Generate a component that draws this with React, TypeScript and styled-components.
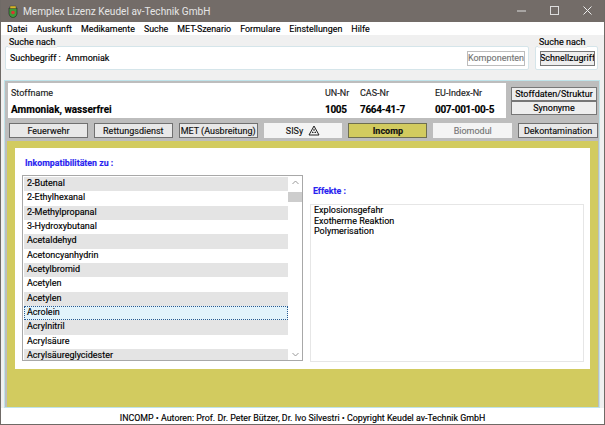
import React from "react";
import styled, { createGlobalStyle } from "styled-components";

const Global = createGlobalStyle`
  html, body { margin: 0; padding: 0; background: #f0f0f0; }
  * { box-sizing: border-box; }
`;

const Win = styled.div`
  width: 605px; height: 425px; display: flex; flex-direction: column;
  background: #f0f0f0; border: 1px solid #6f6a66; border-top: 0; overflow: hidden;
  font-family: Roboto, "Liberation Sans", Arial, sans-serif; font-size: 9px; color: #000;
  -webkit-text-stroke: 0.15px currentColor;
`;
const TitleBar = styled.div`
  height: 22px; flex: none; background: #736c68; color: #e6e6e6; display: flex; align-items: center;
  font-size: 10.1px; padding-left: 6px; -webkit-text-stroke: 0;
`;
const TitleText = styled.span` margin-left: 4px; flex: 1; `;
const WinBtn = styled.div`
  width: 33px; height: 22px; display: flex; align-items: center; justify-content: center;
`;
const Menu = styled.div`
  height: 13px; flex: none; display: flex; gap: 9px; padding-left: 6px; background: #fff; align-items: center; font-size: 8.9px;
`;
const SearchRow = styled.div`
  height: 45px; flex: none; display: flex; padding: 0 0 0 4px; gap: 6px;
`;
const SearchGroup = styled.div<{ $w: number }>`
  position: relative; width: ${p => p.$w}px; height: 24px; margin-top: 11px; background: #fff;
  border: 1px solid #d5e5ea; border-radius: 2px; display: flex; align-items: center; padding: 0 3px 0 4px;
`;
const Legend = styled.span`
  position: absolute; top: -11px; left: 2px; background: #f0f0f0; padding: 0 1px; line-height: 12px;
`;
const SearchLabel = styled.span` width: 56px; `;
const SearchValue = styled.span` flex: 1; `;
const SmallBtn = styled.div<{ $w: number; $h?: number; $dim?: boolean }>`
  width: ${p => p.$w}px; height: ${p => p.$h ?? 14}px; flex: none; display: flex; align-items: center; justify-content: center;
  background: ${p => (p.$dim ? "#fff" : "#eee")}; color: ${p => (p.$dim ? "#777" : "#000")};
  border: 1px solid ${p => (p.$dim ? "#bdbdbd" : "#777")}; white-space: nowrap; font-size: 9px; overflow: hidden;
`;
const Main = styled.div`
  flex: 1; min-height: 0; background: #bdbdbd; border: 1px solid #bfe3ea; margin: 0 0 0 3px; padding: 2px 1px 0 3px;
  display: flex; flex-direction: column; width: 596px;
`;
const Substance = styled.div`
  height: 35px; flex: none; display: flex; gap: 5px;
`;
const SubstanceInfo = styled.div`
  width: 498px; background: #fff; display: grid; grid-template-columns: 314px 35px 75px 1fr; padding: 5px 3px 0 3px;
`;
const Field = styled.div`
  display: flex; flex-direction: column; gap: 5px;
`;
const FieldLabel = styled.span` font-size: 9px; color: #222; line-height: 11px; `;
const FieldValue = styled.span` font-size: 10px; font-weight: 700; color: #000; line-height: 11px; `;
const FieldNumber = styled(FieldValue)` letter-spacing: -0.35px; `;
const SideBtns = styled.div`
  display: flex; flex-direction: column; padding-top: 4px;
`;
const Tabs = styled.div`
  height: 18px; flex: none; margin-top: 5px; display: flex; gap: 6px; padding-left: 1px;
`;
const Tab = styled.div<{ $w: number; $kind?: "on" | "flat" | "dim" }>`
  width: ${p => p.$w}px; height: 15px; display: flex; align-items: center; justify-content: center; gap: 5px;
  font-size: 9px; white-space: nowrap;
  background: ${p => (p.$kind === "on" ? "#d2cb5f" : p.$kind === "flat" || p.$kind === "dim" ? "#f4f4f4" : "#e8e8e8")};
  color: ${p => (p.$kind === "dim" ? "#777" : "#111")};
  font-weight: ${p => (p.$kind === "on" ? 700 : 400)};
  border: 1px solid ${p => (p.$kind === "on" ? "#6e6e50" : p.$kind === "flat" || p.$kind === "dim" ? "#f4f4f4" : "#707070")};
`;
const Panel = styled.div`
  flex: 1; min-height: 0; background: #d2cb5f; margin-left: -1px; padding: 7px 8px 38px 8px; display: flex;
`;
const Card = styled.div`
  flex: 1; background: #fff; display: grid; grid-template-columns: 281px 274px; gap: 7px; padding: 0 6px 7px 7px;
`;
const Column = styled.div` display: flex; flex-direction: column; min-height: 0; `;
const Heading = styled.div<{ $h: number; $top: number }>`
  height: ${p => p.$h}px; flex: none; color: #2a1ff0; font-weight: 700; font-size: 8.8px; padding: ${p => p.$top}px 0 0 3px;
`;
const ListBox = styled.div`
  flex: 1; min-height: 0; position: relative; border: 1px solid #a8a8a8; padding: 1px 0 0 1px; margin-bottom: 1px; background: #fff; overflow: hidden;
`;
const Row = styled.div<{ $alt: boolean; $sel: boolean }>`
  height: 14.33px; width: 264px; padding: 0 0 2px 3px; display: flex; align-items: center; font-size: 9px;
  background: ${p => (p.$sel ? "#e2f3fb" : p.$alt ? "#e4e4e4" : "#fff")};
  outline: ${p => (p.$sel ? "1px dotted #2a5a90" : "none")}; outline-offset: -1px; color: #000;
`;
const Scroll = styled.div`
  position: absolute; top: 0; right: 0; bottom: 0; width: 14px; background: #fff; display: flex; flex-direction: column; align-items: center;
`;
const Arrow = styled.div` height: 12px; flex: none; display: flex; align-items: center; justify-content: center; `;
const Thumb = styled.div` width: 14px; height: 10px; background: #cdcdcd; margin-top: 4px; `;
const Spacer = styled.div` flex: 1; `;
const EffectBox = styled.div`
  flex: 1; border: 1px solid #e6e6e6; padding: 0 3px; font-size: 9px; line-height: 10.7px; color: #000;
`;
const Footer = styled.div`
  height: 16px; flex: none; background: #fff; display: flex; align-items: center; justify-content: center; padding-top: 3px; font-size: 8.85px; color: #000;
`;

const items = ["2-Butenal","2-Ethylhexanal","2-Methylpropanal","3-Hydroxybutanal","Acetaldehyd","Acetoncyanhydrin","Acetylbromid","Acetylen","Acetylen","Acrolein","Acrylnitril","Acrylsäure","Acrylsäureglycidester"];

export default function App() {
  return (
    <Win>
      <Global />
      <TitleBar>
        <svg width="12" height="13" viewBox="0 0 12 13"><path d="M2 3h8v6q0 2.500-4 4q-4-1.500-4-4z" fill="#3f9a3a" stroke="#222" strokeWidth=".6"/><path d="M3 1h6v2.500H3z" fill="#d8b52a" stroke="#333" strokeWidth=".4"/><circle cx="6" cy="7.500" r="1.800" fill="#d33"/></svg>
        <TitleText>Memplex Lizenz Keudel av-Technik GmbH</TitleText>
        <WinBtn><svg width="10" height="10" viewBox="0 0 10 10"><path d="M0 5h9" stroke="#ddd"/></svg></WinBtn>
        <WinBtn><svg width="10" height="10" viewBox="0 0 10 10"><rect x=".5" y=".5" width="8" height="8" fill="none" stroke="#ddd"/></svg></WinBtn>
        <WinBtn><svg width="10" height="10" viewBox="0 0 10 10"><path d="M.5.5l8 8M8.500.5l-8 8" stroke="#eee"/></svg></WinBtn>
      </TitleBar>
      <Menu>{["Datei","Auskunft","Medikamente","Suche","MET-Szenario","Formulare","Einstellungen","Hilfe"].map(m => <span key={m}>{m}</span>)}</Menu>
      <SearchRow>
        <SearchGroup $w={524}>
          <Legend>Suche nach</Legend>
          <SearchLabel>Suchbegriff :</SearchLabel>
          <SearchValue>Ammoniak</SearchValue>
          <SmallBtn $w={58} $h={15} $dim>Komponenten</SmallBtn>
        </SearchGroup>
        <SearchGroup $w={63}>
          <Legend>Suche nach</Legend>
          <SmallBtn $w={55} $h={15}>Schnellzugriff</SmallBtn>
        </SearchGroup>
      </SearchRow>
      <Main>
        <Substance>
          <SubstanceInfo>
            <Field><FieldLabel>Stoffname</FieldLabel><FieldValue>Ammoniak, wasserfrei</FieldValue></Field>
            <Field><FieldLabel>UN-Nr</FieldLabel><FieldNumber>1005</FieldNumber></Field>
            <Field><FieldLabel>CAS-Nr</FieldLabel><FieldNumber>7664-41-7</FieldNumber></Field>
            <Field><FieldLabel>EU-Index-Nr</FieldLabel><FieldNumber>007-001-00-5</FieldNumber></Field>
          </SubstanceInfo>
          <SideBtns>
            <SmallBtn $w={86}>Stoffdaten/Struktur</SmallBtn>
            <SmallBtn $w={86}>Synonyme</SmallBtn>
          </SideBtns>
        </Substance>
        <Tabs>
          <Tab $w={79}>Feuerwehr</Tab>
          <Tab $w={79}>Rettungsdienst</Tab>
          <Tab $w={79}>MET (Ausbreitung)</Tab>
          <Tab $w={79} $kind="flat">SISy
            <svg width="12" height="11" viewBox="0 0 12 11"><path d="M6 1l5 9H1z" fill="none" stroke="#222"/><path d="M6 3.500l1 2H5zM3.800 8l1-1.800 .8 1.300-.3.500zM8.200 8l-1-1.800-.8 1.300 .3.500z" fill="#111"/></svg>
          </Tab>
          <Tab $w={79} $kind="on">Incomp</Tab>
          <Tab $w={79} $kind="dim">Biomodul</Tab>
          <Tab $w={80}>Dekontamination</Tab>
        </Tabs>
        <Panel>
          <Card>
            <Column>
              <Heading $h={27} $top={10}>Inkompatibilitäten zu :</Heading>
              <ListBox>
                {items.map((t, i) => <Row key={i} $alt={i % 2 === 0} $sel={i === 9}>{t}</Row>)}
                <Scroll>
                  <Arrow><svg width="7" height="5" viewBox="0 0 7 5"><path d="M.5 4l3-3 3 3" fill="none" stroke="#999"/></svg></Arrow>
                  <Thumb />
                  <Spacer />
                  <Arrow><svg width="7" height="5" viewBox="0 0 7 5"><path d="M.5 1l3 3 3-3" fill="none" stroke="#999"/></svg></Arrow>
                </Scroll>
              </ListBox>
            </Column>
            <Column>
              <Heading $h={56} $top={38}>Effekte :</Heading>
              <EffectBox>Explosionsgefahr<br/>Exotherme Reaktion<br/>Polymerisation</EffectBox>
            </Column>
          </Card>
        </Panel>
      </Main>
      <Footer>INCOMP • Autoren: Prof. Dr. Peter Bützer, Dr. Ivo Silvestri • Copyright Keudel av-Technik GmbH</Footer>
    </Win>
  );
}
